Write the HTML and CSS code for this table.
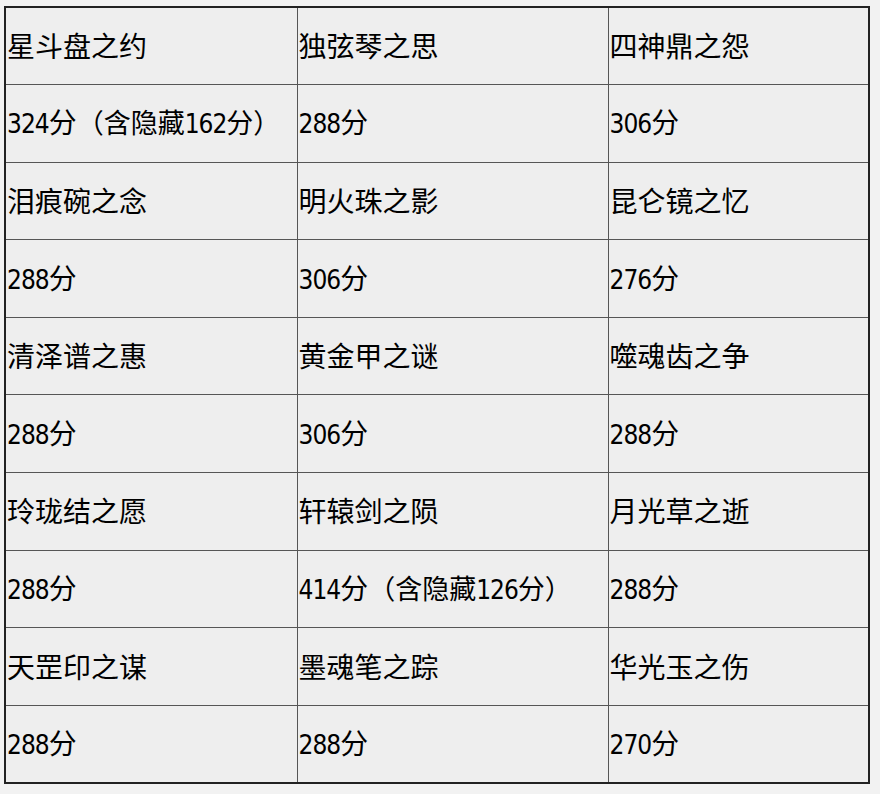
FILE: index.html
```html
<!DOCTYPE html>
<html lang="zh">
<head>
<meta charset="utf-8">
<link rel="stylesheet" href="styles.css">
</head>
<body>
<table class="scores">
  <colgroup>
    <col class="c1"><col class="c2"><col class="c3">
  </colgroup>
  <tr><td>星斗盘之约</td><td>独弦琴之思</td><td>四神鼎之怨</td></tr>
  <tr><td><span class="num">324</span>分<span class="paren">（含隐藏<span class="num">162</span>分）</span></td><td><span class="num">288</span>分</td><td><span class="num">306</span>分</td></tr>
  <tr><td>泪痕碗之念</td><td>明火珠之影</td><td>昆仑镜之忆</td></tr>
  <tr><td><span class="num">288</span>分</td><td><span class="num">306</span>分</td><td><span class="num">276</span>分</td></tr>
  <tr><td>清泽谱之惠</td><td>黄金甲之谜</td><td>噬魂齿之争</td></tr>
  <tr><td><span class="num">288</span>分</td><td><span class="num">306</span>分</td><td><span class="num">288</span>分</td></tr>
  <tr><td>玲珑结之愿</td><td>轩辕剑之陨</td><td>月光草之逝</td></tr>
  <tr><td><span class="num">288</span>分</td><td><span class="num">414</span>分<span class="paren">（含隐藏<span class="num">126</span>分）</span></td><td><span class="num">288</span>分</td></tr>
  <tr><td>天罡印之谋</td><td>墨魂笔之踪</td><td>华光玉之伤</td></tr>
  <tr><td><span class="num">288</span>分</td><td><span class="num">288</span>分</td><td><span class="num">270</span>分</td></tr>
</table>
</body>
</html>
```
FILE: styles.css
```css
html, body {
  margin: 0;
  padding: 0;
  background: #f2f2f2;
}
body {
  padding: 6px 0 0 4px;
}
.scores {
  border-collapse: collapse;
  border: 2px solid #222;
  background: #eeeeee;
  table-layout: fixed;
  width: 864px;
  font-family: "Noto Sans CJK SC", "Noto Sans", sans-serif;
  font-size: 28px;
  color: #000;
}
.c1 { width: 292px; }
.c2 { width: 311px; }
.c3 { width: 261px; }
.scores td {
  border: 1px solid #555;
  height: 77.6px;
  padding: 0 0 2px 1px;
  vertical-align: middle;
  white-space: nowrap;
  line-height: 1;
  box-sizing: border-box;
}
.num {
  font-family: "Liberation Sans Narrow", "DejaVu Sans Condensed", sans-serif;
  font-size: 26px;
  letter-spacing: -1px;
}
.paren {
  font-size: 27px;
}
```
